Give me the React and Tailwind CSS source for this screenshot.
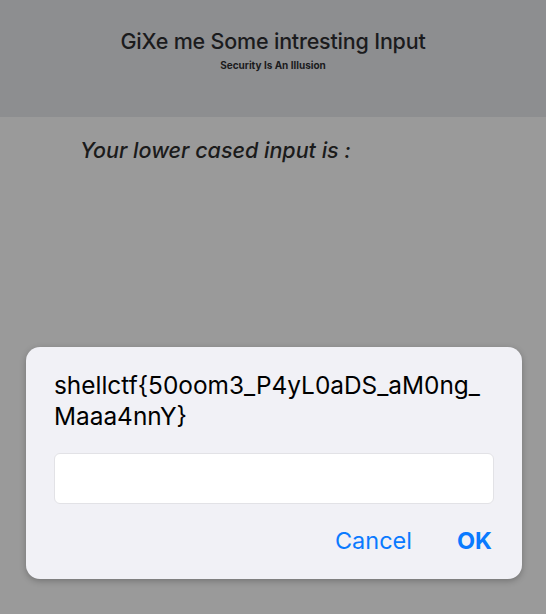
export default function App() {
  return (
    <div className="relative h-[614px] w-full overflow-hidden bg-[#9a9a9a] font-['Inter',sans-serif]">
      <header className="flex h-[117px] flex-col items-center bg-[#8d8e90] pt-[27px]">
        <h1 className="text-[21.5px] leading-[28px] font-medium tracking-[-0.2px] text-[#1b1b1d]">GiXe me Some intresting Input</h1>
        <p className="mt-[4px] text-[10px] leading-[12px] font-bold text-[#1b1b1d]">Security Is An Illusion</p>
      </header>

      <p className="pl-[80px] pt-[19px] text-[21.5px] leading-[28px] font-medium italic text-[#1b1b1b]">
        Your lower cased input is :
      </p>

      {/* prompt dialog */}
      <div className="absolute left-[26px] top-[347px] w-[496px] rounded-[14px] bg-[#f1f1f6] px-[28px] pt-[23px] pb-[23px] shadow-[0_2px_6px_rgba(0,0,0,0.25)]">
        <p className="text-[24.4px] leading-[31px] text-black">
          shellctf{'{'}50oom3_P4yL0aDS_aM0ng_<br />Maaa4nnY{'}'}
        </p>
        <input
          type="text"
          className="mt-[21px] block h-[51px] w-full rounded-[6px] border border-[#e2e2e6] bg-white px-3 text-[20px] outline-none"
        />
        <div className="mt-[22px] flex items-center justify-end gap-[45px] pr-[2px]">
          <button type="button" className="text-[23.5px] leading-[30px] text-[#0a7aff]">Cancel</button>
          <button type="button" className="text-[23.5px] leading-[30px] font-bold text-[#0a7aff]">OK</button>
        </div>
      </div>
    </div>
  )
}
